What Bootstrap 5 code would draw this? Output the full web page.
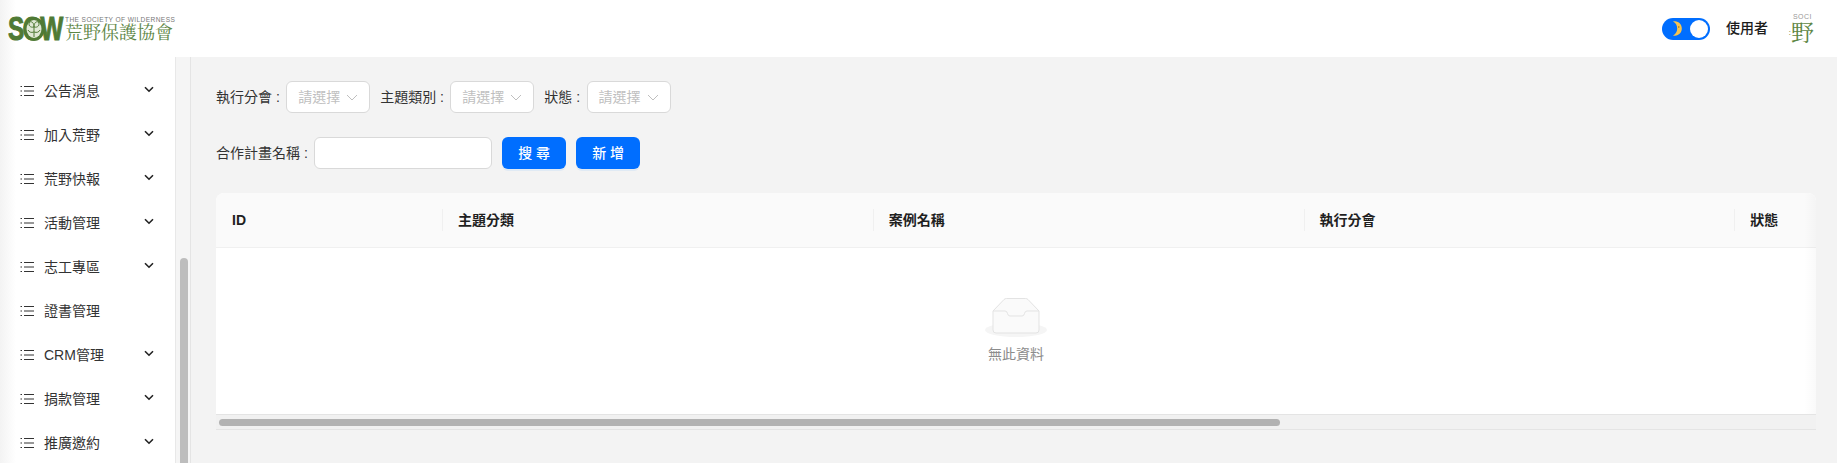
<!DOCTYPE html>
<html lang="zh-Hant">
<head>
  <meta charset="UTF-8">
  <title>荒野保護協會</title>
  <link href="https://cdn.jsdelivr.net/npm/bootstrap@5.3.0/dist/css/bootstrap.min.css" rel="stylesheet">
  <style>
    html, body { height: 100%; overflow: hidden; }
    body {
      font-family: "Liberation Sans", "Noto Sans CJK TC", sans-serif;
      font-size: 14px;
      color: #262626;
      background: #f3f3f3;
    }
    .top-bar {
      height: 57px;
      padding: 0 21px 0 8px;
      background: linear-gradient(90deg, #f3f3f3 0, #fff 16px);
    }
    .logo-mark { position: relative; width: 57px; height: 24px; }
    .logo-sow {
      font-size: 33px;
      line-height: 24px;
      font-weight: 700;
      letter-spacing: -2px;
      color: #4f7a35;
      white-space: nowrap;
      transform: scaleX(.74);
      transform-origin: 0 50%;
      -webkit-text-stroke: 1px #4f7a35;
    }
    .logo-leaf { position: absolute; left: 15px; top: 0; }
    .logo-en {
      font-size: 6.6px;
      line-height: 8px;
      color: #777;
      white-space: nowrap;
      letter-spacing: .4px;
    }
    .logo-zh {
      font-family: "Liberation Serif", "Noto Serif CJK TC", "Noto Sans CJK TC", serif;
      font-size: 18px;
      line-height: 18px;
      color: #5d8645;
      white-space: nowrap;
    }
    .theme-switch {
      width: 48px;
      height: 22px;
      border-radius: 11px;
      background: #006eff;
      padding: 2px;
    }
    .switch-knob { width: 18px; height: 18px; border-radius: 50%; background: #fff; }
    .user-name { font-size: 14px; font-weight: 500; margin: 0 18px 0 16px; color: #1c1c1c; }
    .avatar { width: 30px; text-align: right; }
    .avatar-en { font-size: 7px; line-height: 8px; color: #999; letter-spacing: .5px; white-space: nowrap; padding-right: 4px; }
    .avatar-zh {
      font-family: "Liberation Serif", "Noto Serif CJK TC", "Noto Sans CJK TC", serif;
      font-size: 23px;
      line-height: 22px;
      color: #5d8645;
      white-space: nowrap;
      padding-right: 2px;
    }
    .avatar-dots { font-size: 9px; vertical-align: 6px; }
    .page-body { height: calc(100vh - 57px); }
    .side-menu {
      width: 176px;
      padding-top: 12px;
      background: linear-gradient(90deg, #f3f3f3 0, #fff 16px);
      border-right: 1px solid #e8e8e8;
      overflow: hidden;
    }
    .menu-row { height: 44px; padding: 0 21px 0 20px; font-size: 14px; color: #333; }
    .menu-row .menu-label { margin-left: 10px; }
    .menu-arrow { margin-left: auto; margin-top: -4px; }
    .side-track {
      width: 15px;
      padding: 201px 2px 0 4px;
      background: #f5f5f5;
      border-right: 1px solid #e4e4e4;
    }
    .side-thumb { width: 8px; border-radius: 4px 4px 0 0; background: #bdbdbd; }
    .content-area { padding: 24px 21px 0 25px; min-width: 0; }
    .filter-row { height: 32px; margin-bottom: 24px; }
    .filter-label { white-space: nowrap; margin-right: 6.4px; color: #333; }
    .fake-select {
      width: 84px;
      height: 32px;
      margin-right: 10px;
      padding: 0 11px;
      background: #fff;
      border: 1px solid #d9d9d9;
      border-radius: 6px;
      color: #bfbfbf;
    }
    .name-input {
      width: 178px;
      height: 32px;
      padding: 0 11px;
      margin-right: 10px;
      border: 1px solid #d9d9d9;
      border-radius: 6px;
      outline: 0;
    }
    .act-btn {
      width: 64px;
      height: 32px;
      margin-right: 10px;
      padding: 0;
      font-size: 14px;
      font-weight: 500;
      background: #006eff;
      border: 0;
      border-radius: 6px;
      box-shadow: 0 2px 0 rgba(5, 125, 255, .08);
    }
    .table-wrap {
      position: relative;
      margin-top: 24px;
      width: 1600px;
      border-radius: 8px 8px 0 0;
      background: #fff;
      overflow: hidden;
    }
    .table-wrap::after {
      content: "";
      position: absolute;
      top: 0;
      right: 0;
      bottom: 16px;
      width: 12px;
      background: linear-gradient(90deg, rgba(0, 0, 0, 0), rgba(0, 0, 0, .025));
    }
    .data-head {
      height: 55px;
      background: #fafafa;
      border-bottom: 1px solid #f0f0f0;
      font-weight: 600;
      color: #1f1f1f;
    }
    .head-cell { position: relative; flex: none; padding-left: 16px; width: 430.75px; }
    .head-cell:first-child { width: 226px; }
    .head-cell + .head-cell::before {
      content: "";
      position: absolute;
      left: 0;
      top: 50%;
      height: 22px;
      margin-top: -11px;
      border-left: 1px solid #f0f0f0;
    }
    .empty-box { height: 166px; padding-top: 49px; color: #8c8c8c; }
    .empty-box svg { display: block; margin-bottom: 6px; }
    .h-track {
      height: 16px;
      padding: 4px 3px 3px;
      background: #f1f1f1;
      border-top: 1px solid #e4e4e4;
      border-bottom: 1px solid #e4e4e4;
    }
    .h-thumb { width: 1061px; height: 100%; border-radius: 5px; background: #b2b2b2; }
  </style>
</head>
<body>
  <header class="top-bar d-flex align-items-center justify-content-between">
    <div class="d-flex align-items-center">
      <div class="logo-mark">
        <div class="logo-sow">SOW</div>
        <svg class="logo-leaf" width="22" height="24" viewBox="0 0 22 24">
          <ellipse cx="11" cy="12" rx="10.500" ry="12" fill="#4f7a35"/>
          <ellipse cx="11" cy="12" rx="7.500" ry="9" fill="#dfe8d6"/>
          <path d="M11 20V10M11 10C7 11 5 8 6.500 5 9 4 11 6 11 10ZM11 10C15 11 17 8 15.500 5 13 4 11 6 11 10ZM11 15C8 16 6 15 5 13M11 15C14 16 16 15 17 13" fill="none" stroke="#4f7a35" stroke-width="1"/>
        </svg>
      </div>
      <div>
        <div class="logo-en">THE SOCIETY OF WILDERNESS</div>
        <div class="logo-zh">荒野保護協會</div>
      </div>
    </div>
    <div class="d-flex align-items-center">
      <div class="theme-switch d-flex align-items-center justify-content-end">
        <svg width="9" height="15" viewBox="0 0 9 15" class="me-2">
          <path d="M2 .3C6 .6 8.800 3.400 8.800 7.500S6 14.400 2 14.700C1.200 14.700.6 14.600 0 14.400 2.800 13 4.200 10.500 4.200 7.500S2.800 2 0 .6C.6.400 1.200.3 2 .3Z" fill="#f5c451"/>
          <circle cx="5.800" cy="6" r=".7" fill="#8a6414"/>
        </svg>
        <div class="switch-knob"></div>
      </div>
      <div class="user-name">使用者</div>
      <div class="avatar">
        <div class="avatar-en">SOCI</div>
        <div class="avatar-zh"><span class="avatar-dots">:</span>野</div>
      </div>
    </div>
  </header>

  <div class="page-body d-flex">
    <nav class="side-menu flex-shrink-0" id="sideMenu"></nav>
    <div class="side-track d-flex flex-shrink-0"><div class="side-thumb"></div></div>

    <main class="content-area flex-grow-1">
      <div class="filter-row d-flex align-items-center">
        <span class="filter-label">執行分會 :</span>
        <div class="fake-select d-flex align-items-center justify-content-between"><span>請選擇</span><svg width="12" height="7" viewBox="0 0 12 7"><path d="M1 1l5 5 5-5" fill="none" stroke="#bfbfbf"/></svg></div>
        <span class="filter-label">主題類別 :</span>
        <div class="fake-select d-flex align-items-center justify-content-between"><span>請選擇</span><svg width="12" height="7" viewBox="0 0 12 7"><path d="M1 1l5 5 5-5" fill="none" stroke="#bfbfbf"/></svg></div>
        <span class="filter-label">狀態 :</span>
        <div class="fake-select d-flex align-items-center justify-content-between"><span>請選擇</span><svg width="12" height="7" viewBox="0 0 12 7"><path d="M1 1l5 5 5-5" fill="none" stroke="#bfbfbf"/></svg></div>
      </div>
      <div class="filter-row d-flex align-items-center">
        <span class="filter-label">合作計畫名稱 :</span>
        <input class="name-input" type="text">
        <button class="btn btn-primary act-btn">搜 尋</button>
        <button class="btn btn-primary act-btn">新 增</button>
      </div>

      <div class="table-wrap">
        <div class="data-head d-flex align-items-center">
          <div class="head-cell">ID</div>
          <div class="head-cell">主題分類</div>
          <div class="head-cell">案例名稱</div>
          <div class="head-cell">執行分會</div>
          <div class="head-cell">狀態</div>
        </div>
        <div class="empty-box d-flex flex-column align-items-center">
          <svg width="64" height="41" viewBox="0 0 64 41">
            <ellipse cx="32" cy="33" rx="31" ry="7" fill="#f5f5f5"/>
            <path d="M9 14 20 2.500Q21 1.500 22.500 1.500H41.500Q43 1.500 44 2.500L55 14V33Q55 36 52 36H12Q9 36 9 33Z" fill="#fafafa" stroke="#e3e3e3"/>
            <path d="M9 14H21Q23 14 23.500 16.500 24 19 26 19H38Q40 19 40.500 16.500 41 14 43 14H55" fill="none" stroke="#e3e3e3"/>
          </svg>
          <div>無此資料</div>
        </div>
        <div class="h-track"><div class="h-thumb"></div></div>
      </div>
    </main>
  </div>

  <script>
    const menuItems = [
      ['公告消息', true], ['加入荒野', true], ['荒野快報', true], ['活動管理', true], ['志工專區', true],
      ['證書管理', false], ['CRM管理', true], ['捐款管理', true], ['推廣邀約', true]
    ];
    const listIcon = '<svg width="14" height="12" viewBox="0 0 14 12"><path d="M4 1.500h10M4 6h10M4 10.500h10" stroke="#333" stroke-width="1"/><path d="M.5 1.500h1.500M.5 6h1.500M.5 10.500h1.500" stroke="#333" stroke-width="1.200"/></svg>';
    const arrowIcon = '<svg class="menu-arrow" width="10" height="7" viewBox="0 0 10 7"><path d="M1 1.200l4 4 4-4" fill="none" stroke="#222" stroke-width="1.600"/></svg>';
    document.getElementById('sideMenu').innerHTML = menuItems.map(item => `
      <div class="menu-row d-flex align-items-center">
        ${listIcon}<span class="menu-label">${item[0]}</span>${item[1] ? arrowIcon : ''}
      </div>`).join('');
  </script>
  <script src="https://cdn.jsdelivr.net/npm/bootstrap@5.3.0/dist/js/bootstrap.bundle.min.js"></script>
</body>
</html>
